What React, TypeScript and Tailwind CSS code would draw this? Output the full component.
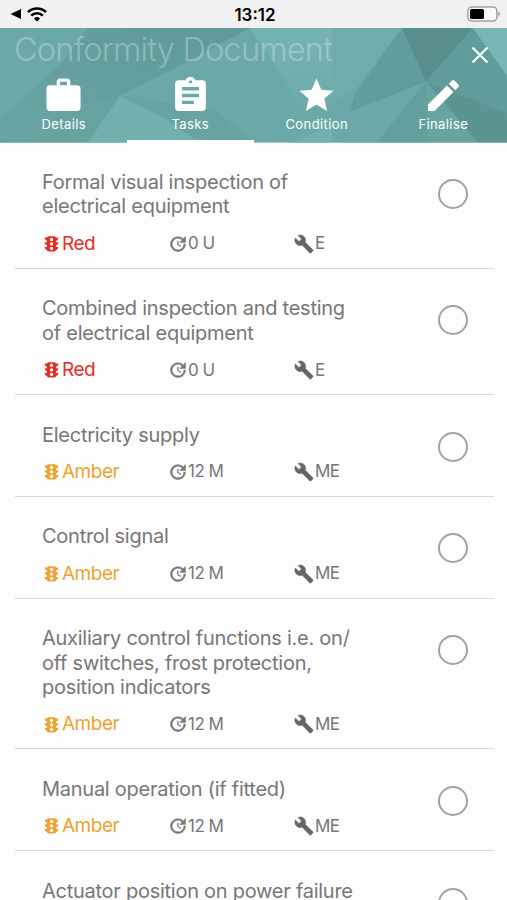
import type { ReactNode } from "react"
import { MdAssignment, MdEdit, MdStar, MdWork } from "react-icons/md"

const tasks = [
  { lines: ["Formal visual inspection of", "electrical equipment"], level: "Red", every: "0 U", skill: "E" },
  { lines: ["Combined inspection and testing", "of electrical equipment"], level: "Red", every: "0 U", skill: "E" },
  { lines: ["Electricity supply"], level: "Amber", every: "12 M", skill: "ME" },
  { lines: ["Control signal"], level: "Amber", every: "12 M", skill: "ME" },
  {
    lines: ["Auxiliary control functions i.e. on/", "off switches, frost protection,", "position indicators"],
    level: "Amber",
    every: "12 M",
    skill: "ME",
  },
  { lines: ["Manual operation (if fitted)"], level: "Amber", every: "12 M", skill: "ME" },
  { lines: ["Actuator position on power failure"], level: "Amber", every: "12 M", skill: "ME" },
]

function StatusBar() {
  return (
    <div className="flex h-7 shrink-0 items-center justify-between bg-[#f1f1f1] pr-[7px] pl-[10px] text-black">
      <div className="flex flex-1 items-center gap-[6px]">
        <svg width="11" height="10" viewBox="0 0 11 10">
          <path d="M0.5 5L11 0v10z" />
        </svg>
        <svg width="20" height="15" viewBox="0 0 20 15" fill="none" stroke="#000" strokeWidth="2.6">
          <path d="M1 5.2a12.8 12.8 0 0 1 18 0M4.2 8.6a8.3 8.3 0 0 1 11.6 0" />
          <path d="M10 14.6l-3-3.1a4.3 4.3 0 0 1 6 0z" fill="#000" stroke="none" />
        </svg>
      </div>
      <span className="pt-[2px] text-[17px] leading-5 font-semibold">13:12</span>
      <div className="flex flex-1 justify-end">
        <svg width="33" height="16" viewBox="0 0 33 16">
          <rect x="0.9" y="0.9" width="29" height="14.2" rx="4" fill="#fafafa" stroke="#a2a2a2" strokeWidth="1.5" />
          <rect x="3" y="3" width="14" height="10" rx="1.5" />
          <path d="M31.3 5.5q1.7.8 1.7 2.5t-1.7 2.5z" fill="#a2a2a2" />
        </svg>
      </div>
    </div>
  )
}

function HeaderPattern() {
  return (
    <svg className="absolute inset-0 h-full w-full" viewBox="0 0 507 115" preserveAspectRatio="none">
      <defs>
        <linearGradient id="shade" x1="0" y1="1" x2="1" y2="0">
          <stop offset="0" stopColor="#68a6a4" />
          <stop offset="1" stopColor="#5e9a97" />
        </linearGradient>
        <linearGradient id="glow" x1="0" y1="1" x2="0" y2="0">
          <stop offset="0" stopColor="#6dabaa" />
          <stop offset="1" stopColor="#75b4b2" />
        </linearGradient>
      </defs>
      <rect width="507" height="115" fill="#6ba9a8" />
      <path d="M88 0H250L187 34L120 68L45 88L0 115V90L62 35z" fill="url(#shade)" />
      <path d="M120 68L45 88L0 115H88z" fill="#66a3a1" />
      <path d="M120 68L88 115H200L160 88z" fill="#72b0ae" />
      <path d="M120 68L160 88L200 115H254L215 82z" fill="#66a3a1" />
      <path d="M250 0H332V76L302 82L280 45z" fill="url(#glow)" />
      <path d="M332 0H402L355 62L332 76z" fill="#6eadab" />
      <path d="M290 115L332 98V115z" fill="#72b0ae" />
      <path d="M402 0L355 66L350 84L426 54L415 0z" fill="#619d9a" />
      <path d="M402 0H473L426 54z" fill="#588f8d" />
      <path d="M473 0L507 48V85L426 54z" fill="#609c99" />
      <path d="M473 0H507V48z" fill="#78b6b3" />
      <path d="M426 54L507 85V115H478z" fill="#5b9592" />
      <path d="M426 54L478 115H428z" fill="#68a5a2" />
      <path d="M426 54L428 115H376z" fill="#639f9c" />
      <path d="M426 54L350 84L340 115H376z" fill="#6ba9a7" />
    </svg>
  )
}

function Tab({ icon, label, active }: { icon: ReactNode; label: string; active?: boolean }) {
  return (
    <div className="flex flex-1 flex-col items-center">
      {icon}
      <span className="text-[13px] leading-4 tracking-[0.4px]">{label}</span>
      {active && <div className="mt-auto h-[3px] w-full bg-white" />}
    </div>
  )
}

function Header() {
  return (
    <div className="relative h-[114.6px] shrink-0 overflow-hidden text-white">
      <HeaderPattern />
      <div className="relative flex h-full flex-col">
        <div className="flex h-[46.5px] items-start justify-between pr-[18px] pl-[14px]">
          <h1 className="text-[32.5px] leading-[43px] font-light tracking-[-0.8px] text-white/30">Conformity Document</h1>
          <svg className="mt-[18px]" width="18" height="18" viewBox="0 0 18 18" stroke="#fff" strokeWidth="2.2">
            <path d="M1.5 1.5l15 15M16.5 1.5l-15 15" />
          </svg>
        </div>
        <div className="flex flex-1 pr-[0.5px] pl-[0.5px]">
          <Tab icon={<MdWork size={41} />} label="Details" />
          <Tab icon={<MdAssignment size={41} />} label="Tasks" active />
          <Tab icon={<MdStar size={41} />} label="Condition" />
          <Tab icon={<MdEdit size={41} />} label="Finalise" />
        </div>
      </div>
    </div>
  )
}

function TrafficLight() {
  return (
    <svg className="mr-[3px] ml-[2px]" width="15" height="16" viewBox="0 0 15 16">
      <g fill="currentColor">
        <path d="M0.600 1.500h13.800q0 2.500-2.600 3.300H3.200Q.6 4 .6 1.500zM.6 6.300h13.800q0 2.500-2.600 3.300H3.200Q.6 8.800.6 6.300zM.6 11h13.800q0 2.500-2.600 3.300H3.200Q.6 13.500.6 11z" />
        <rect x="2.900" y="0.200" width="9.200" height="15.400" rx="1.800" />
      </g>
      <g fill="#fdfdfd">
        <circle cx="7.500" cy="3.400" r="1.600" />
        <circle cx="7.500" cy="7.900" r="1.600" />
        <circle cx="7.500" cy="12.400" r="1.600" />
      </g>
    </svg>
  )
}

function UpdateIcon() {
  return (
    <svg className="-mt-px" width="20" height="20" viewBox="0 0 24 24" fill="currentColor">
      <path
        stroke="currentColor"
        strokeWidth="0.6"
        d="M21 10.12h-6.780l2.740-2.820c-2.730-2.700-7.150-2.800-9.880-.1-2.730 2.710-2.730 7.080 0 9.790s7.150 2.710 9.880 0C18.320 15.650 19 14.080 19 12.100h2c0 1.980-.88 4.550-2.640 6.290-3.510 3.480-9.210 3.480-12.720 0-3.500-3.470-3.530-9.110-.02-12.580s9.140-3.470 12.650 0L21 3v7.120z"
      />
      <path d="M12.500 8v4.250l3.500 2.080-.72 1.210L11 13V8h1.500z" />
    </svg>
  )
}

function WrenchIcon() {
  return (
    <svg className="-mt-px text-[#666]" width="20" height="20" viewBox="0 0 24 24" fill="currentColor">
      <path
        stroke="currentColor"
        strokeWidth="0.5"
        d="M22.700 19l-9.100-9.100c.9-2.300.4-5-1.500-6.900-2-2-5-2.400-7.400-1.300L9 6 6 9 1.600 4.700C.4 7.100.9 10.100 2.900 12.100c1.900 1.900 4.600 2.400 6.900 1.500l9.100 9.100c.4.4 1 .4 1.400 0l2.300-2.300c.5-.4.5-1.100.1-1.400z"
      />
    </svg>
  )
}

function TaskRow({ task }: { task: (typeof tasks)[number] }) {
  return (
    <div className="mr-[13px] ml-[15px] flex shrink-0 justify-between border-b border-[#d9d9d9] pt-[27.6px] pr-[26px] pb-[13.6px] pl-[27px]">
      <div>
        <div className="text-[20px] leading-[24.3px] tracking-[-0.26px] text-[#777]">
          {task.lines.map((line) => (
            <div key={line} className="whitespace-nowrap">
              {line}
            </div>
          ))}
        </div>
        <div className="mt-[15.4px] flex h-5 items-center text-[17px] tracking-[-0.5px] text-[#777]">
          <div
            className={
              "flex w-[126px] items-center text-[19px] " + (task.level === "Red" ? "text-[#e62e24]" : "text-[#efa331]")
            }
          >
            <TrafficLight />
            {task.level}
          </div>
          <div className="flex w-[126px] items-center">
            <UpdateIcon />
            {task.every}
          </div>
          <div className="flex items-center gap-px">
            <WrenchIcon />
            {task.skill}
          </div>
        </div>
      </div>
      <div className="mt-[9px] size-[30px] rounded-full border-2 border-[#a2a2a2]" />
    </div>
  )
}

function App() {
  return (
    <div className="flex h-[900px] w-[507px] flex-col overflow-hidden bg-[#fdfdfd] font-['Inter',sans-serif]">
      <StatusBar />
      <Header />
      {tasks.map((task) => (
        <TaskRow key={task.lines[0]} task={task} />
      ))}
    </div>
  )
}

export default App
